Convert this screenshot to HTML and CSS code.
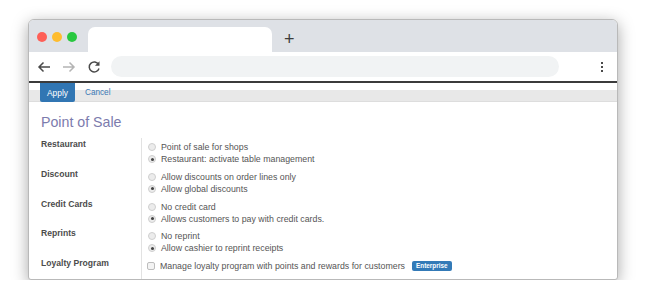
FILE: index.html
```html
<!DOCTYPE html>
<html>
<head>
    <title>Point of Sale</title>
    <link rel="stylesheet" href="styles.css">
</head>
<body>
    <div class="window">
        <div class="tabbar">
            <div class="lights">
                <span class="light red"></span>
                <span class="light yellow"></span>
                <span class="light green"></span>
            </div>
            <div class="tab"></div>
            <div class="newtab">+</div>
        </div>
        <div class="toolbar">
            <svg class="nav" width="16" height="16" viewBox="0 0 16 16">
                <path d="M14 8H3M7.5 3.5L3 8l4.5 4.5" fill="none" stroke="#4a4a4a" stroke-width="1.5"/>
            </svg>
            <svg class="nav" width="16" height="16" viewBox="0 0 16 16">
                <path d="M2 8h11M8.5 3.5L13 8l-4.5 4.5" fill="none" stroke="#b4b4b4" stroke-width="1.5"/>
            </svg>
            <svg class="nav" width="16" height="16" viewBox="0 0 16 16">
                <path d="M12.6 5.5A5 5 0 1 0 13 9.5" fill="none" stroke="#4a4a4a" stroke-width="1.5"/>
                <path d="M13.5 2.2v4.6H8.9z" fill="#4a4a4a"/>
            </svg>
            <div class="url"></div>
            <div class="kebab"><span></span><span></span><span></span></div>
        </div>
        <div class="content">
            <div class="panel">
                <button class="btn-apply">Apply</button>
                <a class="btn-cancel">Cancel</a>
            </div>
            <h2 class="title">Point of Sale</h2>
            <div class="settings">
                <div class="label">Restaurant</div>
                <div class="options">
                    <div class="option"><span class="radio"></span>Point of sale for shops</div>
                    <div class="option"><span class="radio checked"></span>Restaurant: activate table management</div>
                </div>
                <div class="label">Discount</div>
                <div class="options">
                    <div class="option"><span class="radio"></span>Allow discounts on order lines only</div>
                    <div class="option"><span class="radio checked"></span>Allow global discounts</div>
                </div>
                <div class="label">Credit Cards</div>
                <div class="options">
                    <div class="option"><span class="radio"></span>No credit card</div>
                    <div class="option"><span class="radio checked"></span>Allows customers to pay with credit cards.</div>
                </div>
                <div class="label">Reprints</div>
                <div class="options">
                    <div class="option"><span class="radio"></span>No reprint</div>
                    <div class="option"><span class="radio checked"></span>Allow cashier to reprint receipts</div>
                </div>
                <div class="label">Loyalty Program</div>
                <div class="options">
                    <div class="option"><span class="checkbox"></span>Manage loyalty program with points and rewards for customers <span class="badge">Enterprise</span></div>
                </div>
            </div>
        </div>
    </div>
</body>
</html>
```

FILE: styles.css
```css
body {
    margin: 0;
    background: #fff;
    font-family: "Liberation Sans", Arial, sans-serif;
}
.window {
    width: 588px;
    height: 259px;
    margin: 19px auto 0;
    border: 1px solid #b9b9b9;
    border-radius: 6px 6px 3px 3px;
    overflow: hidden;
    background: #fff;
    box-shadow: 0 4px 16px rgba(0, 0, 0, 0.35);
    display: flex;
    flex-direction: column;
}
.tabbar {
    height: 32px;
    background: #dee1e6;
    display: flex;
    align-items: flex-end;
    flex-shrink: 0;
}
.lights {
    display: flex;
    gap: 5px;
    padding-left: 8px;
    align-self: center;
    margin-top: 1px;
}
.light {
    width: 10px;
    height: 10px;
    border-radius: 50%;
}
.red { background: #fe5f57; }
.yellow { background: #febc2e; }
.green { background: #28c840; }
.tab {
    width: 184px;
    height: 25px;
    margin-left: 11px;
    background: #fff;
    border-radius: 7px 7px 0 0;
}
.newtab {
    margin-left: 12px;
    height: 25px;
    line-height: 25px;
    font-size: 18px;
    color: #3c3c3c;
}
.toolbar {
    height: 29px;
    display: flex;
    align-items: center;
    padding-left: 7px;
    gap: 9px;
    border-bottom: 2px solid #3b3b3b;
    flex-shrink: 0;
}
.url {
    width: 448px;
    height: 21px;
    border-radius: 11px;
    background: #f1f3f4;
}
.kebab {
    margin-left: 33px;
    display: flex;
    flex-direction: column;
    gap: 2px;
}
.kebab span {
    width: 2px;
    height: 2px;
    background: #4a4a4a;
}
.content {
    flex: 1;
}
.panel {
    height: 18px;
    display: flex;
    align-items: flex-start;
    background: linear-gradient(#fff 0, #fff 7px, #e8e8e8 7px);
    border-bottom: 1px solid #dddddd;
}
.btn-apply {
    margin-left: 11px;
    width: 35px;
    height: 19px;
    border: none;
    border-radius: 0 0 2px 2px;
    background: #3176b3;
    color: #fff;
    font-family: inherit;
    font-size: 8.4px;
    padding: 0;
}
.btn-cancel {
    margin-left: 10px;
    margin-top: 5px;
    font-size: 8.2px;
    color: #3a78b5;
}
.title {
    margin: 11px 0 7px 12px;
    font-size: 14.2px;
    line-height: 18px;
    font-weight: normal;
    color: #7c7bad;
}
.settings {
    display: grid;
    grid-template-columns: 112px 1fr;
    grid-auto-rows: 29.75px;
}
.label {
    padding-left: 12px;
    font-size: 8.6px;
    line-height: 12px;
    font-weight: bold;
    color: #4c4c4c;
}
.options {
    border-left: 1px solid #e2e2e2;
    padding: 3px 0 0 6px;
}
.option {
    display: flex;
    align-items: center;
    height: 12px;
    font-size: 8.8px;
    color: #555;
}
.radio {
    width: 8px;
    height: 8px;
    box-sizing: border-box;
    border: 1px solid #cfcfcf;
    border-radius: 50%;
    background: #ececec;
    margin-right: 5px;
    display: flex;
    align-items: center;
    justify-content: center;
}
.radio.checked::after {
    content: "";
    width: 3px;
    height: 3px;
    border-radius: 50%;
    background: #444;
}
.checkbox {
    width: 8px;
    height: 8px;
    box-sizing: border-box;
    border: 1px solid #bdbdbd;
    border-radius: 2px;
    background: #f3f3f3;
    margin-left: -1px;
    margin-right: 5px;
}
.badge {
    margin-left: 7px;
    padding: 0 4px;
    height: 10px;
    line-height: 10px;
    border-radius: 2px;
    background: #337ab7;
    color: #fff;
    font-size: 6.4px;
    font-weight: bold;
}
```
